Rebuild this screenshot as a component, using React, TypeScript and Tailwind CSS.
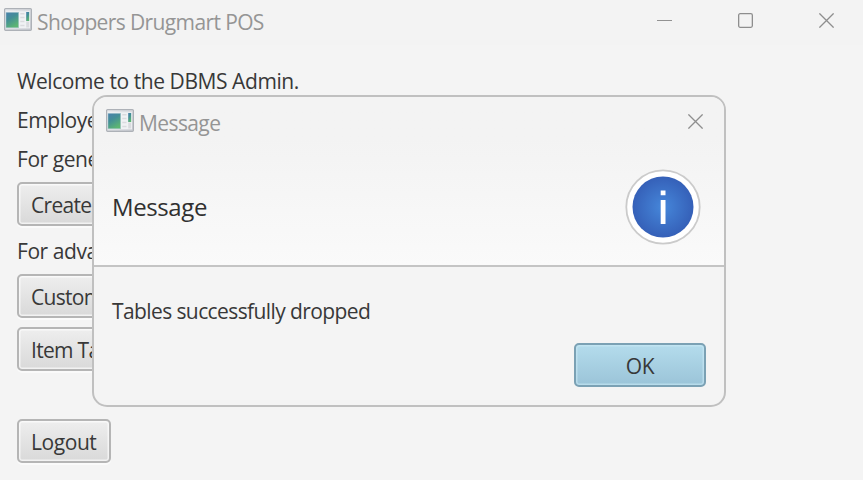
import React from "react";

function AppIcon({ id }: { id: string }) {
  return (
    <svg width="28" height="24" viewBox="0 0 28 24" className="shrink-0">
      <defs>
        <linearGradient id={id} x1="0" y1="0" x2="0.5" y2="1">
          <stop offset="0" stopColor="#4a80ad" />
          <stop offset="0.45" stopColor="#438e97" />
          <stop offset="1" stopColor="#5cb573" />
        </linearGradient>
        <linearGradient id={id + "-frame"} x1="0" y1="0" x2="1" y2="1">
          <stop offset="0" stopColor="#e9ebee" />
          <stop offset="1" stopColor="#c9ccd2" />
        </linearGradient>
      </defs>
      <rect x="0.6" y="1.6" width="26.8" height="21.7" rx="1" fill={`url(#${id}-frame)`} stroke="#adb1b7" strokeWidth="1.2" />
      <rect x="1.8" y="4.3" width="24.2" height="17" fill="#f0f2f4" />
      <rect x="2" y="5.3" width="12.7" height="15.5" fill={`url(#${id})`} stroke="#a9c7cf" strokeWidth="0.5" />
      <path d="M16.3 6.8h4.2M16.3 10.5h4.2M16.3 14.5h4.2M16.3 18.5h4.2" stroke="#d9dbde" strokeWidth="1.6" />
      <rect x="22.2" y="5" width="3" height="9" fill={`url(#${id})`} />
      <rect x="22.2" y="14.5" width="3" height="6" fill="#d9dbdf" />
    </svg>
  );
}

function CloseGlyph() {
  return (
    <svg width="15" height="15" viewBox="0 0 15 15" fill="none" stroke="#8e8e8e" strokeWidth="1.3">
      <path d="M0.4 0.4L14.6 14.6M14.6 0.4L0.4 14.6" />
    </svg>
  );
}

function Button({ className, children }: { className: string; children: React.ReactNode }) {
  return (
    <button
      className={`flex h-11 shrink-0 items-center rounded-[5px] border-2 border-[#b5b5b5] bg-linear-to-b from-[#eeeeee] to-[#d9d9d9] px-3 pt-[3px] whitespace-nowrap shadow-[inset_0_0_0_1.5px_rgba(255,255,255,0.65),0_2px_0_#fafafa] ${className}`}
    >
      {children}
    </button>
  );
}

export default function App() {
  return (
    <div className="relative h-[480px] w-[863px] overflow-hidden bg-[#f4f4f4] font-['Open_Sans','Noto_Sans',sans-serif] text-[21px] leading-[31px] tracking-[-0.43px] text-[#383838]">
      <header className="flex h-[45px] items-start bg-[#f3f3f3] pt-[7px] pl-1 text-[#959595]">
        <AppIcon id="main-icon" />
        <span className="ml-[5px] tracking-[-0.62px]">Shoppers Drugmart POS</span>
        <div className="mt-[6px] mr-[29px] ml-auto flex gap-[66px]">
          <svg width="15" height="15" viewBox="0 0 15 15">
            <path d="M0 7.5H15" stroke="#929292" />
          </svg>
          <svg width="15" height="15" viewBox="0 0 15 15">
            <rect x="0.65" y="0.65" width="13.7" height="13.7" rx="1.5" fill="none" stroke="#8e8e8e" strokeWidth="1.3" />
          </svg>
          <CloseGlyph />
        </div>
      </header>

      <main className="flex flex-col items-start pt-[21px] pl-[17px]">
        <p className="whitespace-nowrap">Welcome to the DBMS Admin.</p>
        <p className="mt-2">Employe</p>
        <p className="mt-2">For gene</p>
        <Button className="mt-[7px] w-[120px] tracking-[-0.7px]">Create</Button>
        <p className="mt-[10px]">For adva</p>
        <Button className="mt-[7px] w-[120px] tracking-[-0.7px]">Custom</Button>
        <Button className="mt-[9px] w-[120px] tracking-[-0.7px]">Item Ta</Button>
        <Button className="mt-12 w-[94px]">Logout</Button>
      </main>

      <section className="absolute top-[95px] left-[92px] flex h-[312px] w-[634px] flex-col overflow-hidden rounded-[15px] border-2 border-[#c0c0c0] bg-[#f4f4f4]">
        <div className="flex h-[170px] flex-col border-b-2 border-[#c4c4c4] bg-linear-to-b from-[#f3f3f3] from-25% to-[#fafafa]">
          <div className="flex items-start pt-[11px] pr-[21px] pl-3 text-[#959595]">
            <AppIcon id="dialog-icon" />
            <span className="ml-[5px] tracking-[-0.6px]">Message</span>
            <div className="mt-[6px] ml-auto">
              <CloseGlyph />
            </div>
          </div>
          <div className="mt-[30px] flex items-center justify-between pr-[23px] pl-[18px]">
            <h1 className="text-[24px] leading-8 tracking-[-0.4px] text-[#303030]">Message</h1>
            <svg width="76" height="76" viewBox="0 0 76 76">
              <defs>
                <radialGradient id="info-fill">
                  <stop offset="0" stopColor="#4687da" />
                  <stop offset="1" stopColor="#3560b8" />
                </radialGradient>
              </defs>
              <circle cx="38" cy="38" r="36.7" fill="#fff" stroke="#cbcbcb" strokeWidth="1.8" />
              <circle cx="38" cy="38" r="30.5" fill="url(#info-fill)" />
              <path d="M35.7 21.5h4.8v4.8h-4.8zM35.7 31h4.8v24h-4.8z" fill="#fff" />
            </svg>
          </div>
        </div>
        <p className="mt-[29px] pl-[18px] tracking-[-0.6px]">Tables successfully dropped</p>
        <button className="mt-4 mr-[18px] flex h-11 w-[132px] items-center justify-center self-end rounded-[5px] border-2 border-[#7ba1b4] bg-linear-to-b from-[#b4dcec] to-[#9bc4d8] pt-[3px] shadow-[inset_0_0_0_1.5px_rgba(200,232,244,0.65)]">
          OK
        </button>
      </section>
    </div>
  );
}
